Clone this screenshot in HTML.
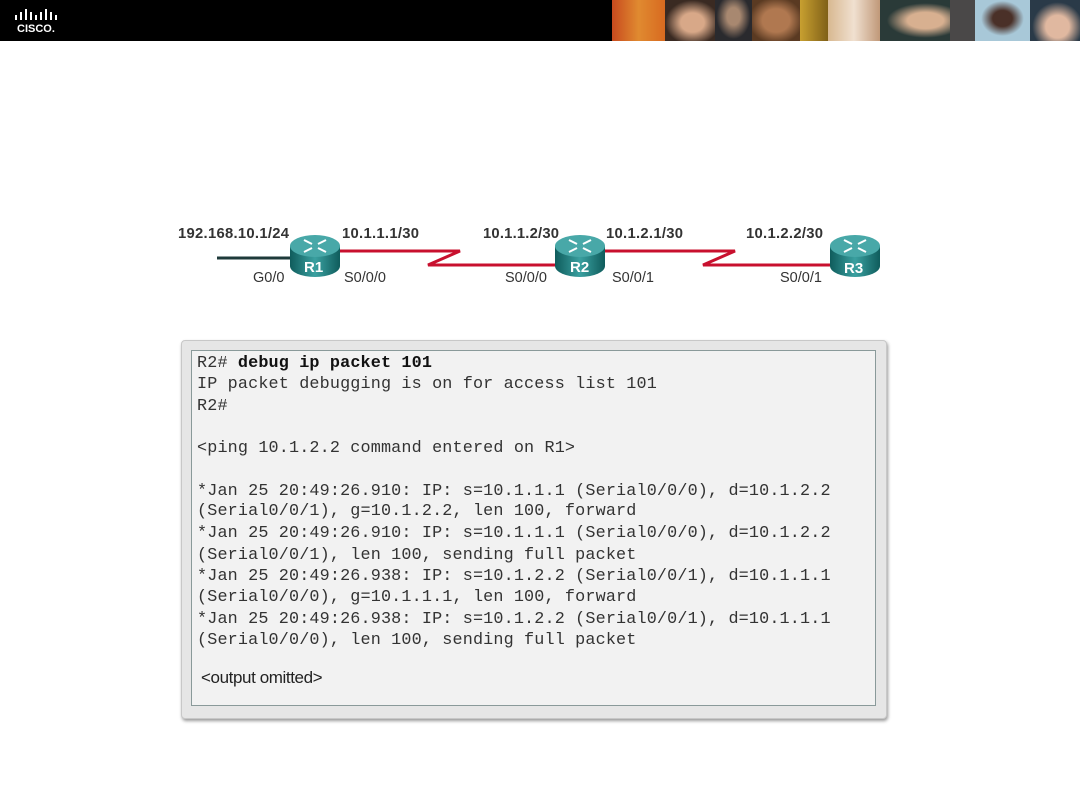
<!DOCTYPE html>
<html><head><meta charset="utf-8"><style>
body{margin:0;width:1080px;height:810px;background:#fff;position:relative;overflow:hidden;font-family:"Liberation Sans",sans-serif}
.hdr{position:absolute;left:0;top:0;width:1080px;height:41px;background:#000}
.ph{position:absolute;top:0;height:41px}
.outer{position:absolute;left:181px;top:340px;width:704px;height:377px;background:#e6e6e6;border:1px solid #c8c8c8;border-radius:4px;box-shadow:1px 2px 3px #999}
.inner{position:absolute;left:191px;top:350px;width:683px;height:354px;background:#f2f2f2;border:1px solid #8a9a9a}
.m{position:absolute;left:197px;font-family:"Liberation Mono",monospace;font-size:16.8px;letter-spacing:0.15px;color:#333;white-space:pre;line-height:20px}
.m b{color:#111}
</style></head><body>
<div class="hdr"></div>
<div class="ph" style="left:612px;width:53px;background:linear-gradient(90deg,#c84a1e,#e08a30,#d86a20)"></div>
<div class="ph" style="left:665px;width:50px;background:radial-gradient(ellipse at 55% 55%,#d8a888 30%,#3a2a22 70%)"></div>
<div class="ph" style="left:715px;width:37px;background:radial-gradient(ellipse at 50% 40%,#a88870 25%,#2a2a2e 65%)"></div>
<div class="ph" style="left:752px;width:48px;background:radial-gradient(ellipse at 50% 50%,#b07850 40%,#5a3a22 80%)"></div>
<div class="ph" style="left:800px;width:28px;background:linear-gradient(90deg,#c8a030,#806018)"></div>
<div class="ph" style="left:828px;width:52px;background:linear-gradient(90deg,#d8b890,#f0e0d0,#c09878)"></div>
<div class="ph" style="left:880px;width:70px;background:radial-gradient(ellipse at 65% 50%,#d8b090 28%,#2a3a38 60%)"></div>
<div class="ph" style="left:950px;width:25px;background:#4a4848"></div>
<div class="ph" style="left:975px;width:55px;background:radial-gradient(ellipse at 50% 45%,#4a3028 25%,#a8c8d8 55%)"></div>
<div class="ph" style="left:1030px;width:50px;background:radial-gradient(ellipse at 55% 65%,#e0b8a0 30%,#2a3a48 65%)"></div>
<svg style="position:absolute;left:14px;top:9px" width="50" height="28">
<g fill="#fff"><rect x="1" y="6" width="2" height="5"/><rect x="6" y="3" width="2" height="8"/><rect x="11" y="0" width="2" height="11"/><rect x="16" y="3" width="2" height="8"/><rect x="21" y="6" width="2" height="5"/><rect x="26" y="3" width="2" height="8"/><rect x="31" y="0" width="2" height="11"/><rect x="36" y="3" width="2" height="8"/><rect x="41" y="6" width="2" height="5"/></g>
<text x="3" y="23" fill="#fff" font-family="Liberation Sans" font-weight="bold" font-size="11">CISCO.</text></svg>

<svg style="position:absolute;left:0;top:220px" width="1080" height="70" font-family="Liberation Sans">
<line x1="217" y1="38" x2="292" y2="38" stroke="#1e3a3a" stroke-width="3"/>
<polyline points="338,31 460,31 428,45 555,45" fill="none" stroke="#c8102e" stroke-width="3"/>
<polyline points="605,31 735,31 703,45 830,45" fill="none" stroke="#c8102e" stroke-width="3"/>
<g font-size="14.8" font-weight="bold" fill="#333">
<text x="178" y="18" textLength="111">192.168.10.1/24</text><text x="342" y="18" textLength="77">10.1.1.1/30</text><text x="483" y="18" textLength="76">10.1.1.2/30</text><text x="606" y="18" textLength="77">10.1.2.1/30</text><text x="746" y="18" textLength="77">10.1.2.2/30</text></g>
<g font-size="14.5" fill="#333"><text x="253" y="62">G0/0</text><text x="344" y="62">S0/0/0</text><text x="505" y="62">S0/0/0</text><text x="612" y="62">S0/0/1</text><text x="780" y="62">S0/0/1</text></g>
<defs><linearGradient id="g" x1="0" x2="1"><stop offset="0" stop-color="#0f5c5c"/><stop offset=".5" stop-color="#3aa0a0"/><stop offset="1" stop-color="#0f5c5c"/></linearGradient></defs>
<g id="r"><path d="M290,26 v20 a25,11 0 0 0 50,0 v-20z" fill="url(#g)"/><ellipse cx="315" cy="26" rx="25" ry="11" fill="#48a8a8"/><path d="M304,20 l8,4 M326,20 l-8,4 M304,32 l8,-4 M326,32 l-8,-4" stroke="#fff" stroke-width="2"/></g>
<use href="#r" x="265"/><use href="#r" x="540"/>
<g font-size="15" font-weight="bold" fill="#fff"><text x="304" y="52">R1</text><text x="570" y="52">R2</text><text x="844" y="53">R3</text></g>
</svg>

<div class="outer"></div><div class="inner"></div>
<div class="m" style="top:354px">R2# <b>debug ip packet 101</b></div>
<div class="m" style="top:375px">IP packet debugging is on for access list 101</div>
<div class="m" style="top:397px">R2#</div>
<div class="m" style="top:439px">&lt;ping 10.1.2.2 command entered on R1&gt;</div>
<div class="m" style="top:482px">*Jan 25 20:49:26.910: IP: s=10.1.1.1 (Serial0/0/0), d=10.1.2.2</div>
<div class="m" style="top:502px">(Serial0/0/1), g=10.1.2.2, len 100, forward</div>
<div class="m" style="top:524px">*Jan 25 20:49:26.910: IP: s=10.1.1.1 (Serial0/0/0), d=10.1.2.2</div>
<div class="m" style="top:546px">(Serial0/0/1), len 100, sending full packet</div>
<div class="m" style="top:567px">*Jan 25 20:49:26.938: IP: s=10.1.2.2 (Serial0/0/1), d=10.1.1.1</div>
<div class="m" style="top:588px">(Serial0/0/0), g=10.1.1.1, len 100, forward</div>
<div class="m" style="top:610px">*Jan 25 20:49:26.938: IP: s=10.1.2.2 (Serial0/0/1), d=10.1.1.1</div>
<div class="m" style="top:631px">(Serial0/0/0), len 100, sending full packet</div>
<div style="position:absolute;left:201px;top:668px;font-size:17px;color:#222;letter-spacing:-0.4px">&lt;output omitted&gt;</div>
</body></html>
